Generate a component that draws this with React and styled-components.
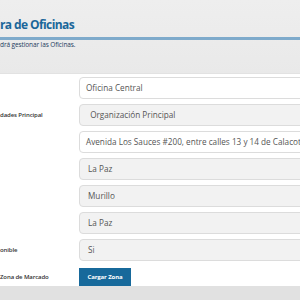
import React from 'react';
import styled, { createGlobalStyle } from 'styled-components';

const GlobalStyle = createGlobalStyle`
  html, body {
    margin: 0;
    padding: 0;
    background: #ffffff;
    font-family: "Open Sans", "DejaVu Sans", sans-serif;
    overflow: hidden;
  }
`;

const fields = [
  { label: '', value: 'Oficina Central', editable: true },
  { label: 'dades Principal', value: ' Organización Principal' },
  { label: '', value: 'Avenida Los Sauces #200, entre calles 13 y 14 de Calacoto', editable: true },
  { label: '', value: 'La Paz' },
  { label: '', value: 'Murillo' },
  { label: '', value: 'La Paz' },
  { label: 'onible', value: 'Si' },
];

const App = () => {
  return (
    <Page>
      <GlobalStyle />
      <Header>
        <Title>ra de Oficinas</Title>
        <Rule />
        <Subtitle>drá gestionar las Oficinas.</Subtitle>
      </Header>
      <Form>
        {fields.map((f, i) => (
          <Row key={i}>
            <Label>{f.label}</Label>
            <Field editable={f.editable ? 1 : 0}>{f.value}</Field>
          </Row>
        ))}
        <Row>
          <Label>Zona de Marcado</Label>
          <div>
            <Button>Cargar Zona</Button>
          </div>
        </Row>
      </Form>
      <Footer />
    </Page>
  );
};

const Page = styled.div`
  width: 300px;
  height: 300px;
  overflow: hidden;
  display: flex;
  flex-direction: column;
`;

const Header = styled.div`
  height: 74px;
  flex-shrink: 0;
  background: linear-gradient(#eeeeee, #e9e9e9);
  border-bottom: 1px solid #e2e2e2;
  padding-top: 16px;
  box-sizing: border-box;
`;

const Title = styled.h1`
  margin: 0;
  font-size: 12px;
  line-height: 18px;
  font-weight: 700;
  color: #1b679a;
  letter-spacing: -0.6px;
`;

const Rule = styled.div`
  height: 3px;
  background: #7eaacb;
  margin-top: 3px;
`;

const Subtitle = styled.p`
  margin: 1px 0 0;
  font-size: 6.5px;
  line-height: 8px;
  color: #1d3c5e;
  font-weight: 400;
  letter-spacing: -0.1px;
`;

const Form = styled.div`
  display: flex;
  flex-direction: column;
  gap: 5.4px;
  padding-top: 3px;
  height: 212px;
  flex-shrink: 0;
  box-sizing: border-box;
`;

const Row = styled.div`
  display: grid;
  grid-template-columns: 79px 240px;
  align-items: center;
  min-height: 21.6px;
`;

const Label = styled.span`
  font-size: 6px;
  font-weight: 600;
  color: #333333;
  white-space: nowrap;
  letter-spacing: -0.1px;
`;

const Field = styled.div`
  height: 21.6px;
  box-sizing: border-box;
  border: 1px solid #dcdcdc;
  border-radius: 4px;
  background: ${p => (p.editable ? '#ffffff' : '#f2f2f2')};
  padding: 0 ${p => (p.editable ? '6px' : '8px')};
  font-size: 8.2px;
  line-height: 19.6px;
  color: #555555;
  white-space: pre;
  overflow: hidden;
`;

const Button = styled.button`
  display: block;
  height: 18px;
  width: 52px;
  padding: 0;
  border: none;
  background: #17699b;
  color: #ffffff;
  font-family: inherit;
  font-size: 6px;
  font-weight: 700;
  letter-spacing: -0.1px;
`;

const Footer = styled.div`
  flex: 1;
  background: #e1e1e1;
`;

export default App;
